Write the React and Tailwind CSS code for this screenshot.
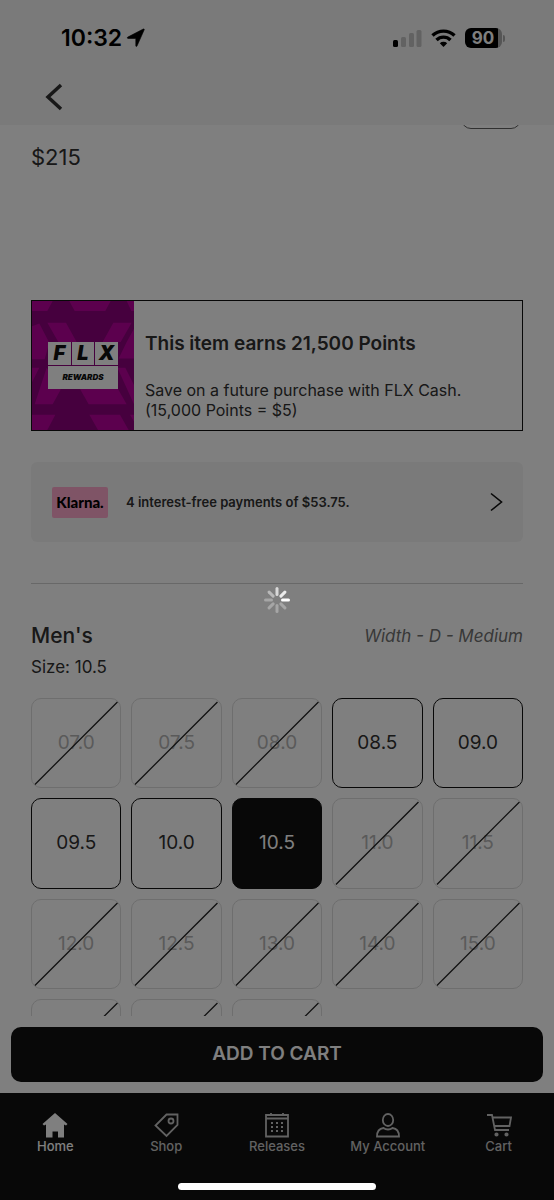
const SIZES = [
  { label: '07.0', stock: false },
  { label: '07.5', stock: false },
  { label: '08.0', stock: false },
  { label: '08.5', stock: true },
  { label: '09.0', stock: true },
  { label: '09.5', stock: true },
  { label: '10.0', stock: true },
  { label: '10.5', stock: true },
  { label: '11.0', stock: false },
  { label: '11.5', stock: false },
  { label: '12.0', stock: false },
  { label: '12.5', stock: false },
  { label: '13.0', stock: false },
  { label: '14.0', stock: false },
  { label: '15.0', stock: false },
  { label: '', stock: false },
  { label: '', stock: false },
  { label: '', stock: false },
];

const SELECTED = '10.5';

function StatusBar() {
  return (
    <div className="flex items-center justify-between pt-6 pl-[61px] pr-[49px]">
      <div className="flex items-center gap-1">
        <span className="text-[23px] leading-7 font-semibold text-black">10:32</span>
        <svg width="20" height="20" viewBox="0 0 20 20" aria-hidden="true">
          <path d="M18.2 1.8 11 18c-.3.7-1.2.6-1.2-.2V10.400H2c-.8 0-.9-1-.2-1.300L17.300 1c.6-.3 1.200.1.900.8z" fill="#000" stroke="#000" strokeWidth=".6" strokeLinejoin="round" />
        </svg>
      </div>
      <div className="flex items-center gap-[9px]">
        <svg width="30" height="18" viewBox="0 0 30 18" aria-hidden="true">
          <rect x="1" y="11" width="5" height="7" rx="1.500" fill="#000" />
          <rect x="9" y="8" width="5" height="10" rx="1.500" fill="#c4c4c4" />
          <rect x="17" y="4" width="5" height="14" rx="1.500" fill="#c4c4c4" />
          <rect x="24.500" y="1" width="5" height="17" rx="1.500" fill="#c4c4c4" />
        </svg>
        <svg width="25" height="18" viewBox="0 0 25 18" fill="none" stroke="#000" strokeWidth="3.400" aria-hidden="true">
          <path d="M1.500 6.500a16 16 0 0 1 22 0" />
          <path d="M5.500 11a10 10 0 0 1 14 0" />
          <path d="M12.500 18 8.800 14.300a5.400 5.400 0 0 1 7.400 0z" fill="#000" stroke="none" />
        </svg>
        <div className="flex items-center gap-px">
          <div className="flex h-5 w-[37px] items-center rounded-md bg-[linear-gradient(to_right,#000_90%,#aaa_90%)]">
            <span className="w-9 text-center text-[17px] leading-5 font-bold text-white">90</span>
          </div>
          <span className="h-[7px] w-[2px] rounded-r-full bg-[#aaa]" />
        </div>
      </div>
    </div>
  );
}

function FlxBadge() {
  return (
    <div className="relative flex w-[102px] shrink-0 items-center justify-center overflow-hidden bg-[#8c007c]">
      <svg className="absolute inset-0 h-full w-full" viewBox="6 6 306 390" preserveAspectRatio="none" fill="#b8009c" aria-hidden="true">
        <path d="M52 72h56l32 58H85zM305 72h-55l-32 58h54z" />
        <path d="M118 6h124l-16 30h-92zM6 6h62L52 36H6zM290 6h22v30h-8z" />
        <path d="M6 82l22-8 30 58-14 50H6zM312 90l-22 40-24 50h46z" />
        <path d="M50 208l42 66-24 44H14zM6 208h22L6 252zM262 208h24l26 52v58z" />
        <path d="M150 272h114l26 46H176z" />
        <path d="M6 350h70l-24 46H6zM178 350h92l26 46h-92zM300 350h12v20z" />
      </svg>
      <div className="relative flex w-[70px] flex-col gap-px">
        <div className="grid grid-cols-3 gap-px text-[20px] leading-[23px] font-black text-[#101010] italic">
          <span className="bg-white text-center">F</span>
          <span className="bg-white text-center">L</span>
          <span className="bg-white text-center">X</span>
        </div>
        <span className="bg-white text-center text-[8px] leading-[23px] font-black text-[#101010] italic">REWARDS</span>
      </div>
    </div>
  );
}

function SizeButton({ label, stock }) {
  if (!stock) {
    return (
      <button type="button" disabled className="relative aspect-square rounded-[10px] border border-[#dcdcdc] text-[19px] text-[#b4b4b4]">
        {label}
        <svg className="absolute inset-0 h-full w-full" viewBox="0 0 90 90" aria-hidden="true">
          <path d="M3 87 87 3" stroke="#202020" strokeWidth="1.300" />
        </svg>
      </button>
    );
  }
  if (label === SELECTED) {
    return (
      <button type="button" aria-pressed="true" className="aspect-square rounded-[10px] border border-[#101010] bg-[#101010] text-[19px] text-white">
        {label}
      </button>
    );
  }
  return (
    <button type="button" className="aspect-square rounded-[10px] border border-[#101010] text-[19px] text-[#303030]">
      {label}
    </button>
  );
}

function HomeIcon() {
  return (
    <svg width="26" height="26" viewBox="0 0 26 26" fill="currentColor" aria-hidden="true">
      <path d="M13 1 25.500 12l-1.500 1.500-2-1V25.500h-6v-6h-5.500v6H4v-13l-2 1L.500 12z" />
    </svg>
  );
}

function TagIcon() {
  return (
    <svg width="26" height="26" viewBox="0 0 26 26" fill="none" stroke="currentColor" strokeWidth="1.800" aria-hidden="true">
      <path d="M13.500 2.500H24.500V13L13.500 24 2.500 13.500z" />
      <circle cx="18" cy="9" r="2.500" />
    </svg>
  );
}

function CalendarIcon() {
  return (
    <svg width="26" height="26" viewBox="0 0 26 26" fill="none" stroke="currentColor" strokeWidth="1.800" aria-hidden="true">
      <path d="M2 3h22v21.500H2zM2 6.500h22M7 1v2M19 1v2" />
      <path d="M7 11h13M7 15h13M7 19h13" strokeWidth="2" strokeDasharray="2 3" />
    </svg>
  );
}

function AccountIcon() {
  return (
    <svg width="26" height="26" viewBox="0 0 26 26" fill="none" stroke="currentColor" strokeWidth="1.800" aria-hidden="true">
      <ellipse cx="13" cy="8" rx="5.200" ry="6" />
      <path d="M8.500 16c2.500 2 6.500 2 9 0 4 .5 6.500 3.500 6.500 8.500H2c0-5 2.500-8 6.500-8.500z" />
    </svg>
  );
}

function CartIcon() {
  return (
    <svg width="26" height="26" viewBox="0 0 26 26" fill="none" stroke="currentColor" strokeWidth="1.800" aria-hidden="true">
      <path d="M1 3h5l3 15h14M6.500 5.500H25L23.500 14H8" />
      <circle cx="10.500" cy="22.500" r="1.200" fill="currentColor" />
      <circle cx="20.500" cy="22.500" r="1.200" fill="currentColor" />
    </svg>
  );
}

const TABS = [
  { label: 'Home', Icon: HomeIcon, active: true },
  { label: 'Shop', Icon: TagIcon },
  { label: 'Releases', Icon: CalendarIcon },
  { label: 'My Account', Icon: AccountIcon },
  { label: 'Cart', Icon: CartIcon },
];

function Spinner() {
  return (
    <svg width="26" height="26" viewBox="0 0 26 26" stroke="#fff" strokeWidth="3" strokeLinecap="round" role="img" aria-label="Loading">
      <path d="M18.500 13h6" />
      <path d="m16.900 9.100 4-4" opacity=".85" />
      <path d="M13 7.500v-6" opacity=".7" />
      <path d="m9.100 9.100-4-4" opacity=".45" />
      <path d="M7.500 13h-6" opacity=".3" />
      <path d="m9.100 16.900-4 4" opacity=".3" />
      <path d="M13 18.500v6" opacity=".3" />
      <path d="m16.900 16.900 4 4" opacity=".3" />
    </svg>
  );
}

export default function App() {
  return (
    <div className="relative flex h-screen flex-col bg-white font-['Inter',sans-serif] text-[#303030]">
      <header className="shrink-0 bg-[#f5f5f5] pb-2">
        <StatusBar />
        <button type="button" aria-label="Back" className="mt-[25px] ml-[34px] flex size-10 items-center justify-center text-[#303030]">
          <svg width="18" height="28" viewBox="0 0 18 28" fill="none" stroke="currentColor" strokeWidth="3.500" aria-hidden="true">
            <path d="M16 2 3 14l13 12" />
          </svg>
        </button>
      </header>

      <main className="min-h-0 flex-1 overflow-hidden px-[31px]">
        <div className="flex h-1 items-end justify-end overflow-hidden pr-[2px]">
          <div className="h-8 w-[60px] shrink-0 rounded-[10px] border border-[#606060]" />
        </div>
        <p className="mt-[14px] text-[22px] leading-7">$215</p>

        <section className="mt-[129px] flex h-[131px] border border-[#101010]">
          <FlxBadge />
          <div className="flex flex-col gap-6 pt-[31px] pl-[11px]">
            <h2 className="text-[19px] leading-6 font-semibold">This item earns 21,500 Points</h2>
            <p className="text-[16px] leading-5">
              Save on a future purchase with FLX Cash.
              <br />
              (15,000 Points = $5)
            </p>
          </div>
        </section>

        <button type="button" className="mt-[31px] flex h-20 w-full items-center rounded-md bg-[#f5f5f5] pr-5 pl-[21px]">
          <span className="flex h-[31px] w-14 items-center justify-center rounded-xs bg-[#ffa8cd] font-['Lato'] text-[15px] font-black text-black">Klarna.</span>
          <span className="ml-[18px] text-[13px] leading-5 font-semibold">4 interest-free payments of $53.75.</span>
          <svg className="ml-auto text-[#101010]" width="14" height="20" viewBox="0 0 14 20" fill="none" stroke="currentColor" strokeWidth="1.600" aria-hidden="true">
            <path d="m2 1.500 10.500 8.500L2 18.500" />
          </svg>
        </button>

        <hr className="mt-[41px] border-[#d0d0d0]" />

        <div className="mt-[38px] flex items-center justify-between">
          <h2 className="text-[21px] leading-7 font-medium">Men's</h2>
          <span className="text-[17px] leading-7 text-[#707070] italic">Width - D - Medium</span>
        </div>
        <p className="mt-[7px] text-[17px] leading-5">Size: 10.5</p>

        <div className="mt-[21px] grid grid-cols-5 gap-[10px]">
          {SIZES.map((size, i) => (
            <SizeButton key={i} {...size} />
          ))}
        </div>
      </main>

      <div className="shrink-0 px-[11px] py-[11px]">
        <button type="button" className="h-[55px] w-full rounded-[10px] bg-[#101010] text-[19px] font-semibold text-white">ADD TO CART</button>
      </div>

      <nav className="grid h-[107px] shrink-0 grid-cols-5 items-start bg-[#101010] pt-[19px]">
        {TABS.map(({ label, Icon, active }) => (
          <a key={label} href="#" className={active ? 'flex flex-col items-center text-white' : 'flex flex-col items-center text-[#c4c4c4]'}>
            <Icon />
            <span className="text-[13px] leading-4 font-medium">{label}</span>
          </a>
        ))}
      </nav>

      {/* loading overlay */}
      <div className="absolute inset-0 flex items-center justify-center bg-black/50">
        <Spinner />
      </div>
      <div className="absolute bottom-[10px] left-1/2 h-[7px] w-[198px] -translate-x-1/2 rounded-full bg-white" />
    </div>
  );
}
